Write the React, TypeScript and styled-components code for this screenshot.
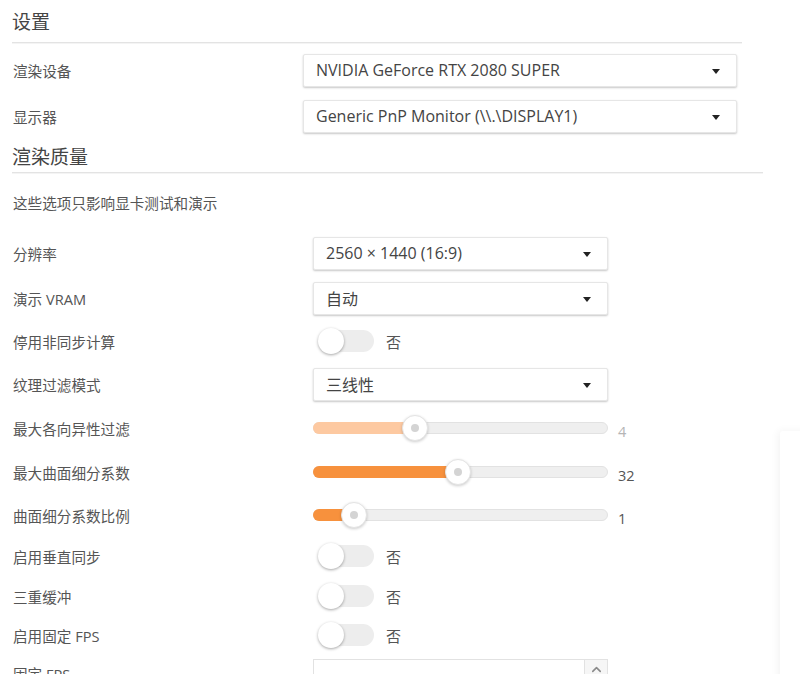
import styled, { createGlobalStyle } from "styled-components";
import { ChevronUp } from "lucide-react";

const GlobalStyle = createGlobalStyle`
  html, body {
    margin: 0;
    padding: 0;
    background: #ffffff;
    overflow: hidden;
  }
  body {
    font-family: "Open Sans", "Noto Sans CJK SC", sans-serif;
    color: #555;
  }
`;

const sliders = {
  aniso: { pct: 34.5, value: "4", disabled: true },
  tess: { pct: 49, value: "32", disabled: false },
  ratio: { pct: 13.5, value: "1", disabled: false },
};

const Select = ({ value }: { value: string }) => (
  <SelectBox>
    <span>{value}</span>
    <Caret />
  </SelectBox>
);

const Toggle = () => (
  <ToggleWrap>
    <Switch>
      <Track />
      <Knob />
    </Switch>
    <ToggleText>否</ToggleText>
  </ToggleWrap>
);

const Slider = ({ pct, value, disabled }: { pct: number; value: string; disabled: boolean }) => (
  <SliderWrap>
    <Rail>
      <Fill $disabled={disabled} style={{ width: `${pct}%` }} />
      <Thumb style={{ left: `${pct}%` }}>
        <Dot />
      </Thumb>
    </Rail>
    <SliderValue $disabled={disabled}>{value}</SliderValue>
  </SliderWrap>
);

export default function App() {
  return (
    <Page>
      <GlobalStyle />
      <Section $w={730}>
        <Title $h={42}>设置</Title>
        <Rows $top={4}>
          <Row $h={46}>
            <Label $w={291}>渲染设备</Label>
            <Control $w={434}>
              <Select value="NVIDIA GeForce RTX 2080 SUPER" />
            </Control>
          </Row>
          <Row $h={46}>
            <Label $w={291}>显示器</Label>
            <Control $w={434}>
              <Select value="Generic PnP Monitor (\\.\DISPLAY1)" />
            </Control>
          </Row>
        </Rows>
      </Section>

      <Section $w={751}>
        <Title $h={33}>渲染质量</Title>
        <Desc>这些选项只影响显卡测试和演示</Desc>
        <Rows $top={17}>
          <Row $h={46}>
            <Label $w={301}>分辨率</Label>
            <Control $w={295}>
              <Select value="2560 × 1440 (16:9)" />
            </Control>
          </Row>
          <Row $h={44}>
            <Label $w={301}>演示 VRAM</Label>
            <Control $w={295}>
              <Select value="自动" />
            </Control>
          </Row>
          <Row $h={42}>
            <Label $w={301}>停用非同步计算</Label>
            <Toggle />
          </Row>
          <Row $h={44}>
            <Label $w={301}>纹理过滤模式</Label>
            <Control $w={295}>
              <Select value="三线性" />
            </Control>
          </Row>
          <Row $h={44}>
            <Label $w={301}>最大各向异性过滤</Label>
            <Slider {...sliders.aniso} />
          </Row>
          <Row $h={44}>
            <Label $w={301}>最大曲面细分系数</Label>
            <Slider {...sliders.tess} />
          </Row>
          <Row $h={42}>
            <Label $w={301}>曲面细分系数比例</Label>
            <Slider {...sliders.ratio} />
          </Row>
          <Row $h={40}>
            <Label $w={301}>启用垂直同步</Label>
            <Toggle />
          </Row>
          <Row $h={40}>
            <Label $w={301}>三重缓冲</Label>
            <Toggle />
          </Row>
          <Row $h={38}>
            <Label $w={301}>启用固定 FPS</Label>
            <Toggle />
          </Row>
          <Row $h={38}>
            <Label $w={301}>固定 FPS</Label>
            <NumberBox>
              <NumberInput />
              <Spin>
                <ChevronUp size={15} strokeWidth={2.5} color="#8a8a8a" />
              </Spin>
            </NumberBox>
          </Row>
        </Rows>
      </Section>

      <SidePanel />
    </Page>
  );
}

const Page = styled.div`
  position: relative;
  width: 800px;
  height: 674px;
  padding-left: 12px;
  box-sizing: border-box;
  overflow: hidden;
`;

const Section = styled.section<{ $w: number }>`
  width: ${(p) => p.$w}px;
`;

const Title = styled.h2<{ $h: number }>`
  margin: 0;
  height: ${(p) => p.$h}px;
  line-height: ${(p) => p.$h + 3}px;
  font-size: 19px;
  font-weight: 400;
  color: #444;
  border-bottom: 1px solid #e3e3e3;
  box-shadow: 0 1px 0 #f4f4f4;
`;

const Desc = styled.p`
  margin: 20px 0 0 1px;
  line-height: 20px;
  font-size: 14.6px;
  color: #555;
`;

const Rows = styled.div<{ $top: number }>`
  display: flex;
  flex-direction: column;
  padding-top: ${(p) => p.$top}px;
`;

const Row = styled.div<{ $h: number }>`
  display: flex;
  align-items: center;
  height: ${(p) => p.$h}px;
`;

const Label = styled.div<{ $w: number }>`
  width: ${(p) => p.$w}px;
  flex-shrink: 0;
  padding-left: 1px;
  box-sizing: border-box;
  font-size: 14.6px;
  color: #555;
`;

const Control = styled.div<{ $w: number }>`
  width: ${(p) => p.$w}px;
`;

const SelectBox = styled.div`
  display: flex;
  align-items: center;
  justify-content: space-between;
  height: 33px;
  padding: 0 16px 0 12px;
  box-sizing: border-box;
  background: #fff;
  border: 1px solid #e6e6e6;
  border-radius: 2px;
  box-shadow: 0 1px 2px rgba(0, 0, 0, 0.22);
  font-size: 16px;
  color: #444;
  white-space: nowrap;
`;

const Caret = styled.i`
  width: 0;
  height: 0;
  border-left: 4px solid transparent;
  border-right: 4px solid transparent;
  border-top: 5px solid #222;
  margin-top: 2px;
`;

const ToggleWrap = styled.div`
  display: flex;
  align-items: center;
  gap: 12px;
  padding-left: 5px;
`;

const Switch = styled.div`
  position: relative;
  width: 56px;
  height: 26px;
`;

const Track = styled.div`
  position: absolute;
  top: 2px;
  bottom: 2px;
  left: 4px;
  right: 0;
  border-radius: 11px;
  background: #ededed;
`;

const Knob = styled.div`
  position: absolute;
  left: 0;
  top: 0;
  width: 26px;
  height: 26px;
  border-radius: 50%;
  background: #fff;
  box-shadow: 0 1px 3px rgba(0, 0, 0, 0.35);
`;

const ToggleText = styled.span`
  font-size: 15px;
  color: #555;
`;

const SliderWrap = styled.div`
  display: flex;
  align-items: center;
  gap: 10px;
`;

const Rail = styled.div`
  position: relative;
  width: 295px;
  height: 12px;
  box-sizing: border-box;
  border-radius: 6px;
  background: #efefef;
  border: 1px solid #e2e2e2;
`;

const Fill = styled.div<{ $disabled: boolean }>`
  height: 100%;
  margin: -1px 0 0 -1px;
  padding-bottom: 2px;
  border-radius: 6px 0 0 6px;
  background: ${(p) => (p.$disabled ? "#fdc9a1" : "#f7913d")};
`;

const Thumb = styled.div`
  position: absolute;
  top: 50%;
  width: 26px;
  height: 26px;
  transform: translate(-50%, -50%);
  box-sizing: border-box;
  border-radius: 50%;
  background: #fff;
  border: 1px solid #e4e4e4;
  box-shadow: 0 1px 3px rgba(0, 0, 0, 0.2);
  display: flex;
  align-items: center;
  justify-content: center;
`;

const Dot = styled.div`
  width: 8px;
  height: 8px;
  border-radius: 50%;
  background: #d4d4d4;
`;

const SliderValue = styled.span<{ $disabled: boolean }>`
  margin-top: 6px;
  font-size: 14.5px;
  color: ${(p) => (p.$disabled ? "#b5b5b5" : "#555")};
`;

const NumberBox = styled.div`
  display: flex;
  width: 295px;
  height: 30px;
  margin-top: 2px;
  box-sizing: border-box;
  border: 1px solid #e2e2e2;
  background: #fff;
`;

const NumberInput = styled.div`
  flex: 1;
`;

const Spin = styled.div`
  width: 22px;
  display: flex;
  justify-content: center;
  padding-top: 2px;
  border-left: 1px solid #e2e2e2;
  background: #f6f6f6;
`;

const SidePanel = styled.div`
  position: absolute;
  left: 780px;
  top: 431px;
  width: 120px;
  height: 300px;
  background: #fff;
  border-radius: 3px 0 0 0;
  box-shadow: -2px 0 8px rgba(0, 0, 0, 0.05);
`;
